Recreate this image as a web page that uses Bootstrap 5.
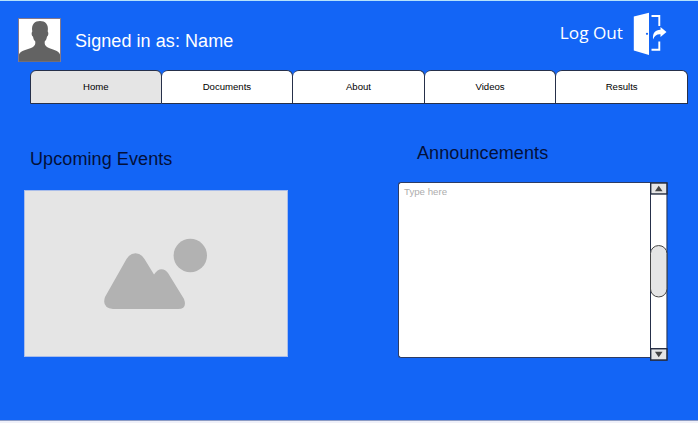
<!DOCTYPE html>
<html lang="en">
<head>
<meta charset="utf-8">
<meta name="viewport" content="width=device-width, initial-scale=1">
<title>Home</title>
<link href="https://cdn.jsdelivr.net/npm/bootstrap@5.3.0/dist/css/bootstrap.min.css" rel="stylesheet">
<style>
body{font-family:"Liberation Sans",Arial,sans-serif;background:#f0f1fa;height:423px;overflow:hidden}
.screen{height:421px;background:#1365f6;border-top:1px solid #b5e2fb;border-bottom:1px solid #8d9cc4}
.topbar{height:69px;padding-left:18px;padding-right:31px}
.avatar{width:44px;height:45px;margin-top:17px}
.signed{font-size:18px;line-height:22px;margin:29px 0 0 13px;color:#fff;letter-spacing:.07px}
.logout{font-family:"Open Sans",sans-serif;font-size:17.2px;line-height:24px;margin-top:20px;color:#fff;text-decoration:none}
.door{width:34px;height:44px;margin:11px 0 0 10px}
.tabs{margin:0 10px 0 30px;height:34px}
.tabs .nav-link{border:1px solid #26304a;border-left-width:0;border-radius:6px 6px 0 0;background:#fff;color:#000;font-size:9.6px;line-height:32px;padding:0}
.tabs .nav-item:first-child .nav-link{border-left-width:1px}
.tabs .nav-link.active{background:#e5e5e5;color:#000}
h2{font-size:18px;line-height:22px;margin:0;color:#03103a;letter-spacing:.09px}
.events{width:264px;margin:44px 0 0 24px}
.events h2{padding-left:6px}
.picture{width:264px;height:167px;margin-top:20px;background:#e5e5e5;border:1px solid #a9bdea}
.news{width:270px;margin:38px 30px 0 0}
.news h2{padding-left:19px}
.feed{height:179px;margin-top:18px}
.typing{width:253px;height:176px;resize:none;border:1px solid #2d3c63;border-right:0;border-radius:3px 0 0 3px;background:#fff;padding:2px 5px;font:9.7px/13px "Liberation Sans",Arial,sans-serif;overflow:hidden}
.typing::placeholder{color:#adadad;opacity:1}
.scroller{width:18px;height:179px}
</style>
<script src="https://cdn.jsdelivr.net/npm/bootstrap@5.3.0/dist/js/bootstrap.bundle.min.js"></script>
</head>
<body>
<div class="screen">
  <header class="topbar d-flex align-items-start">
    <svg class="avatar" viewBox="0 0 44 45">
      <rect x=".5" y=".5" width="42" height="43" fill="#fff" stroke="#84798c"/>
      <path d="M1 43.500V36.500C2 32.500 10 31.500 15 29 17 27.500 17.500 26 17.300 23.500 16 22.500 15.300 20.500 15 18.500 13.600 18 13.200 14.500 14.300 13.500 13 6 17 3 22 3S31 6 29.700 13.500C30.800 14.500 30.400 18 29 18.500 28.700 20.500 28 22.500 26.700 23.500 26.500 26 27 27.500 29 29 34 31.500 41 32.500 42 36.500V43.500Z" fill="#636363"/>
    </svg>
    <div class="signed">Signed in as: Name</div>
    <a class="logout ms-auto" href="#">Log Out</a>
    <svg class="door" viewBox="0 0 34 44">
      <path d="M.8 4.500 16 .8V43L.8 38.500Z" fill="#fff"/>
      <circle cx="14" cy="21.800" r="1.100" fill="#1365f6"/>
      <path d="M18.500 4H26.300V14M18.500 37.700H26.300V29.500" fill="none" stroke="#fff" stroke-width="1.900"/>
      <path d="M20 27.500C19.500 20.500 22 18 27.500 17.700V15L33.500 20 27.500 25V22.300C24 22 21.800 23.500 20 27.500Z" fill="#fff"/>
    </svg>
  </header>
  <ul class="tabs nav nav-fill nav-justified">
    <li class="nav-item"><a class="nav-link active" href="#">Home</a></li>
    <li class="nav-item"><a class="nav-link" href="#">Documents</a></li>
    <li class="nav-item"><a class="nav-link" href="#">About</a></li>
    <li class="nav-item"><a class="nav-link" href="#">Videos</a></li>
    <li class="nav-item"><a class="nav-link" href="#">Results</a></li>
  </ul>
  <main class="d-flex justify-content-between align-items-start">
    <section class="events">
      <h2>Upcoming Events</h2>
      <div class="picture">
        <svg class="d-block" width="262" height="165" viewBox="25 191 262 165" fill="#b2b2b2">
          <circle cx="190.300" cy="255.500" r="16.700"/>
          <path d="M105 297 126.500 259Q130 253.200 135.500 253.200T144.500 259L154 274.500Q157.500 269.200 161.500 269.200T168 273L184 299Q187.500 309 178 309H113Q101.500 307.500 105 297Z"/>
        </svg>
      </div>
    </section>
    <section class="news">
      <h2>Announcements</h2>
      <div class="feed d-flex align-items-start">
        <textarea class="typing" placeholder="Type here" aria-label="Type here"></textarea>
        <svg class="scroller" viewBox="0 0 18 179">
          <rect x=".5" y=".5" width="16.500" height="178" fill="#fff" stroke="#26304a"/>
          <rect x=".7" y=".7" width="16.300" height="11" fill="#e5e5e5" stroke="#222b40" stroke-width="1.400"/>
          <path d="M5 9 8.800 3.500 12.600 9Z" fill="#444"/>
          <rect x=".7" y="167" width="16.300" height="11.300" fill="#e5e5e5" stroke="#222b40" stroke-width="1.400"/>
          <path d="M5 170 8.800 175.500 12.600 170Z" fill="#444"/>
          <rect x=".5" y="63.500" width="16.500" height="51.500" rx="8" fill="#e5e5e5" stroke="#444"/>
        </svg>
      </div>
    </section>
  </main>
</div>
</body>
</html>
